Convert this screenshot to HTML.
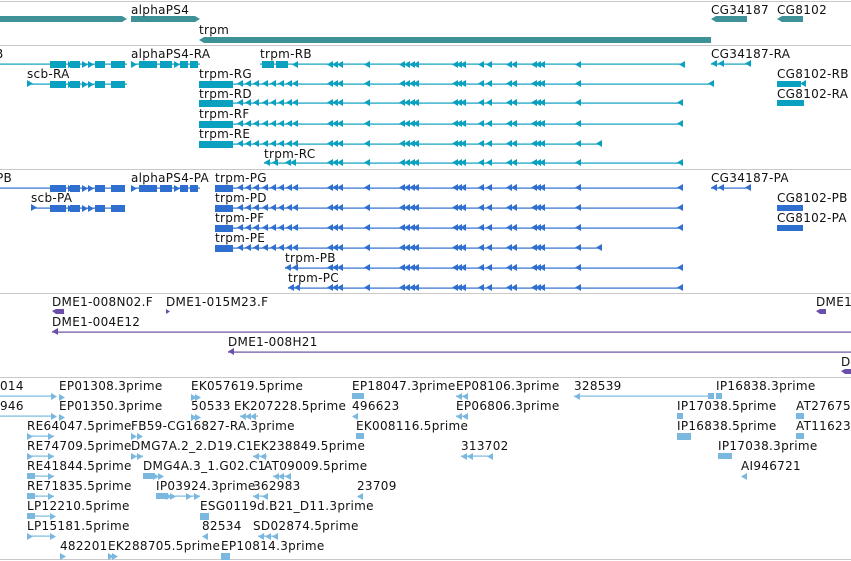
<!DOCTYPE html>
<html><head><meta charset="utf-8"><style>
body{margin:0;width:851px;height:561px;overflow:hidden;background:#fff;position:relative;font-family:"DejaVu Sans","Liberation Sans",sans-serif;font-size:12px;color:#111;letter-spacing:0.3px}
.t{position:absolute;white-space:nowrap;line-height:14px}
svg{position:absolute;left:0;top:0}
</style></head><body>
<svg width="851" height="561">
<defs>
<polygon id="l" points="0,3.5 6,0 6,7"/>
<polygon id="r" points="6,3.5 0,0 0,7"/>
<g id="arrA">
<use href="#l" x="237"/><use href="#l" x="245"/><use href="#l" x="253"/><use href="#l" x="262"/><use href="#l" x="270"/><use href="#l" x="278"/><use href="#l" x="286"/><use href="#l" x="292"/>
</g>
<g id="arrB">
<use href="#l" x="327"/><use href="#l" x="332"/><use href="#l" x="337"/><use href="#l" x="364"/>
<use href="#l" x="399"/><use href="#l" x="404"/><use href="#l" x="409"/><use href="#l" x="413"/>
<use href="#l" x="452"/><use href="#l" x="456"/><use href="#l" x="460"/><use href="#l" x="478"/><use href="#l" x="486"/>
<use href="#l" x="506"/><use href="#l" x="511"/><use href="#l" x="531"/><use href="#l" x="535"/><use href="#l" x="539"/><use href="#l" x="575"/>
</g>
<g id="arr"><use href="#arrA"/><use href="#arrB"/></g>
<g id="scb"><rect x="50" y="-3" width="16" height="7"/><use href="#r" x="68" y="-3"/><rect x="70" y="-3" width="10" height="7"/><use href="#r" x="82" y="-3"/><use href="#r" x="88" y="-3"/><rect x="95" y="-3" width="10" height="7"/><rect x="111" y="-3" width="14" height="7"/></g>
<g id="aps"><use href="#r" x="131" y="-3"/><rect x="139" y="-3" width="18" height="7"/><rect x="160" y="-3" width="12" height="7"/><use href="#r" x="174" y="-3"/><rect x="180" y="-3" width="8" height="7"/><rect x="190" y="-3" width="8" height="7"/></g>
</defs>
<g fill="none" stroke="#c8c8c8"><line x1="0" y1="1.5" x2="851" y2="1.5"/><line x1="0" y1="45.5" x2="851" y2="45.5"/><line x1="0" y1="169.5" x2="851" y2="169.5"/><line x1="0" y1="293.5" x2="851" y2="293.5"/><line x1="0" y1="377.5" x2="851" y2="377.5"/><line x1="0" y1="559.5" x2="851" y2="559.5"/></g>
<g fill="#3f9198"><rect x="0" y="16" width="122" height="6"/><polygon points="122,16 127,19 122,22"/><rect x="131" y="16" width="64" height="6"/><polygon points="195,16 200,19 195,22"/><polygon points="199,40 204,37 204,43"/><rect x="204" y="37" width="507" height="6"/><polygon points="711,19 716,16 716,22"/><rect x="716" y="16" width="31" height="6"/><polygon points="777,19 782,16 782,22"/><rect x="782" y="16" width="21" height="6"/></g>
<g fill="#0aa0c0" stroke="none">
<rect x="0" y="63.5" width="127" height="1.2"/><use href="#scb" y="64"/>
<rect x="131" y="63.5" width="69" height="1.2"/><use href="#aps" y="64"/>
<rect x="260" y="63.5" width="425" height="1.2"/><rect x="262" y="61" width="12" height="7"/><rect x="276" y="61" width="12" height="7"/><g transform="translate(0,61)"><use href="#arrB"/><use href="#l" x="292"/><use href="#l" x="679"/></g>
<rect x="711" y="63.5" width="40" height="1.2"/><use href="#l" x="711" y="60"/><use href="#l" x="718" y="60"/><use href="#l" x="745" y="60"/>
<rect x="27" y="83.5" width="100" height="1.2"/><use href="#r" x="27" y="80"/><use href="#scb" y="84"/>
<rect x="199" y="83.5" width="512" height="1.2"/><rect x="199" y="81" width="34" height="7"/><g transform="translate(0,80)"><use href="#arr"/><use href="#l" x="708"/></g>
<rect x="777" y="81" width="24" height="6"/><use href="#l" x="800" y="80"/>
<rect x="199" y="102.5" width="484" height="1.2"/><rect x="199" y="100" width="34" height="7"/><g transform="translate(0,99)"><use href="#arr"/><use href="#l" x="677"/></g>
<rect x="777" y="100" width="27" height="6"/>
<rect x="199" y="123.5" width="484" height="1.2"/><rect x="199" y="121" width="34" height="7"/><g transform="translate(0,120)"><use href="#arr"/><use href="#l" x="677"/></g>
<rect x="199" y="143.5" width="401" height="1.2"/><rect x="199" y="141" width="34" height="7"/><g transform="translate(0,140)"><use href="#arr"/><use href="#l" x="596"/></g>
<rect x="264" y="162.5" width="419" height="1.2"/><g transform="translate(0,159)"><use href="#l" x="264"/><use href="#l" x="272"/><use href="#l" x="285"/><use href="#l" x="290"/><use href="#arrB"/><use href="#l" x="677"/></g>
</g>
<g fill="#2e6fd0">
<rect x="0" y="187.5" width="115" height="1.2"/><use href="#scb" y="188"/>
<rect x="131" y="187.5" width="69" height="1.2"/><use href="#aps" y="188"/>
<rect x="215" y="187.5" width="468" height="1.2"/><rect x="215" y="185" width="18" height="7"/><g transform="translate(0,184)"><use href="#arr"/><use href="#l" x="677"/></g>
<rect x="711" y="187.5" width="40" height="1.2"/><use href="#l" x="711" y="184"/><use href="#l" x="718" y="184"/><use href="#l" x="745" y="184"/>
<rect x="31" y="207.5" width="84" height="1.2"/><use href="#r" x="31" y="204"/><use href="#scb" y="208"/>
<rect x="215" y="207.5" width="468" height="1.2"/><rect x="215" y="205" width="18" height="7"/><g transform="translate(0,204)"><use href="#arr"/><use href="#l" x="677"/></g>
<rect x="777" y="205" width="26" height="6"/>
<rect x="215" y="227.5" width="468" height="1.2"/><rect x="215" y="225" width="18" height="7"/><g transform="translate(0,224)"><use href="#arr"/><use href="#l" x="677"/></g>
<rect x="777" y="225" width="26" height="6"/>
<rect x="215" y="247.5" width="385" height="1.2"/><rect x="215" y="245" width="18" height="7"/><g transform="translate(0,244)"><use href="#arr"/><use href="#l" x="596"/></g>
<rect x="285" y="267.5" width="398" height="1.2"/><g transform="translate(0,264)"><use href="#l" x="285"/><use href="#l" x="292"/><use href="#arrB"/><use href="#l" x="677"/></g>
<rect x="288" y="287.5" width="395" height="1.2"/><g transform="translate(0,284)"><use href="#l" x="288"/><use href="#l" x="294"/><use href="#arrB"/><use href="#l" x="677"/></g>
</g>
<g fill="#6a4fa8">
<polygon points="52,311 56,309 64,309 64,314 56,314"/><polygon points="166,309 170,311.5 166,314"/><polygon points="816,311 820,309 826,309 826,314 820,314"/>
<rect x="52" y="331.5" width="799" height="1.2"/><use href="#l" x="52" y="328"/>
<rect x="228" y="351.5" width="623" height="1.2"/><use href="#l" x="228" y="348"/>
<polygon points="841,371 845,369 851,369 851,374 845,374"/>
</g>
<g fill="#7ab8e0">
<rect x="0" y="395.5" width="54" height="1.2"/><use href="#r" x="51" y="393"/><use href="#r" x="59" y="394"/>
<rect x="0" y="415.5" width="54" height="1.2"/><use href="#r" x="51" y="413"/><use href="#r" x="59" y="414"/>
<use href="#r" x="191" y="394"/><use href="#r" x="195" y="394"/><use href="#r" x="191" y="414"/><use href="#r" x="195" y="414"/>
<use href="#l" x="240" y="413"/><use href="#l" x="245" y="413"/><use href="#l" x="250" y="413"/><rect x="240" y="415.5" width="18" height="1.2"/>
<rect x="352" y="393" width="12" height="6"/><use href="#l" x="352" y="413"/><rect x="356" y="433" width="8" height="6"/>
<use href="#l" x="456" y="393"/><use href="#l" x="462" y="393"/><rect x="456" y="395.5" width="12" height="1.2"/>
<use href="#l" x="456" y="413"/><use href="#l" x="462" y="413"/><rect x="456" y="415.5" width="12" height="1.2"/>
<rect x="574" y="395.5" width="140" height="1.2"/><use href="#l" x="574" y="393"/><rect x="708" y="393" width="6" height="6"/>
<rect x="716" y="393" width="6" height="6"/><rect x="677" y="413" width="6" height="6"/><rect x="677" y="433" width="14" height="7"/>
<rect x="718" y="453" width="14" height="6"/><use href="#l" x="741" y="473"/><rect x="796" y="433" width="8" height="6"/><rect x="796" y="413" width="8" height="6"/>
<g transform="translate(0,433)"><rect x="27" y="2.5" width="27" height="1.2"/><use href="#r" x="27"/><use href="#r" x="48"/></g>
<g transform="translate(0,453)"><rect x="27" y="2.5" width="27" height="1.2"/><use href="#r" x="27"/><use href="#r" x="48"/></g>
<g transform="translate(0,473)"><rect x="27" y="2.5" width="27" height="1.2"/><rect x="27" y="0" width="8" height="6"/><use href="#r" x="48"/></g>
<g transform="translate(0,493)"><rect x="27" y="2.5" width="27" height="1.2"/><rect x="27" y="0" width="8" height="6"/><use href="#r" x="48"/></g>
<g transform="translate(0,513)"><rect x="27" y="2.5" width="27" height="1.2"/><rect x="27" y="0" width="8" height="6"/><use href="#r" x="50"/></g>
<g transform="translate(0,533)"><rect x="27" y="2.5" width="27" height="1.2"/><use href="#r" x="27"/><use href="#r" x="50"/></g>
<use href="#r" x="131" y="433"/><use href="#r" x="137" y="433"/><use href="#r" x="131" y="453"/><use href="#r" x="137" y="453"/><rect x="131" y="455.5" width="12" height="1.2"/>
<rect x="143" y="473" width="12" height="6"/><use href="#r" x="153" y="473"/><use href="#r" x="158" y="473"/>
<rect x="156" y="493" width="12" height="6"/><use href="#r" x="166" y="493"/><use href="#r" x="170" y="493"/><rect x="156" y="495.5" width="44" height="1.2"/><use href="#r" x="186" y="493"/><use href="#r" x="194" y="493"/>
<use href="#l" x="253" y="453"/><use href="#l" x="260" y="453"/><rect x="253" y="455.5" width="14" height="1.2"/>
<use href="#l" x="273" y="473"/><use href="#l" x="278" y="473"/><use href="#l" x="285" y="473"/><rect x="273" y="475.5" width="18" height="1.2"/>
<use href="#l" x="253" y="493"/><use href="#l" x="262" y="493"/><rect x="253" y="495.5" width="14" height="1.2"/>
<rect x="200" y="513" width="9" height="7"/><use href="#l" x="202" y="533"/>
<use href="#l" x="258" y="533"/><use href="#l" x="265" y="533"/><use href="#l" x="272" y="533"/><rect x="258" y="535.5" width="20" height="1.2"/>
<use href="#l" x="461" y="453"/><use href="#l" x="467" y="453"/><use href="#l" x="487" y="453"/><rect x="461" y="455.5" width="32" height="1.2"/>
<use href="#l" x="357" y="493"/>
<use href="#r" x="60" y="553"/><use href="#r" x="108" y="553"/><use href="#r" x="112" y="553"/><rect x="221" y="553" width="9" height="7"/>
</g>
</svg>
<div class="t" style="left:131px;top:3px">alphaPS4</div>
<div class="t" style="left:199px;top:23px">trpm</div>
<div class="t" style="left:711px;top:3px">CG34187</div>
<div class="t" style="left:777px;top:3px">CG8102</div>

<div class="t" style="left:-5px;top:47px">B</div>
<div class="t" style="left:131px;top:47px">alphaPS4-RA</div>
<div class="t" style="left:260px;top:47px">trpm-RB</div>
<div class="t" style="left:711px;top:47px">CG34187-RA</div>
<div class="t" style="left:27px;top:67px">scb-RA</div>
<div class="t" style="left:199px;top:67px">trpm-RG</div>
<div class="t" style="left:777px;top:67px">CG8102-RB</div>
<div class="t" style="left:199px;top:87px">trpm-RD</div>
<div class="t" style="left:777px;top:87px">CG8102-RA</div>
<div class="t" style="left:199px;top:107px">trpm-RF</div>
<div class="t" style="left:199px;top:127px">trpm-RE</div>
<div class="t" style="left:264px;top:147px">trpm-RC</div>

<div class="t" style="left:-4px;top:171px">PB</div>
<div class="t" style="left:131px;top:171px">alphaPS4-PA</div>
<div class="t" style="left:215px;top:171px">trpm-PG</div>
<div class="t" style="left:711px;top:171px">CG34187-PA</div>
<div class="t" style="left:31px;top:191px">scb-PA</div>
<div class="t" style="left:215px;top:191px">trpm-PD</div>
<div class="t" style="left:777px;top:191px">CG8102-PB</div>
<div class="t" style="left:215px;top:211px">trpm-PF</div>
<div class="t" style="left:777px;top:211px">CG8102-PA</div>
<div class="t" style="left:215px;top:231px">trpm-PE</div>
<div class="t" style="left:285px;top:251px">trpm-PB</div>
<div class="t" style="left:288px;top:271px">trpm-PC</div>

<div class="t" style="left:52px;top:295px">DME1-008N02.F</div>
<div class="t" style="left:166px;top:295px">DME1-015M23.F</div>
<div class="t" style="left:816px;top:295px">DME1</div>
<div class="t" style="left:52px;top:315px">DME1-004E12</div>
<div class="t" style="left:228px;top:335px">DME1-008H21</div>
<div class="t" style="left:841px;top:355px">D</div>

<div class="t" style="left:0px;top:379px">014</div>
<div class="t" style="left:59px;top:379px">EP01308.3prime</div>
<div class="t" style="left:191px;top:379px">EK057619.5prime</div>
<div class="t" style="left:352px;top:379px">EP18047.3prime</div>
<div class="t" style="left:456px;top:379px">EP08106.3prime</div>
<div class="t" style="left:574px;top:379px">328539</div>
<div class="t" style="left:716px;top:379px">IP16838.3prime</div>
<div class="t" style="left:0px;top:399px">946</div>
<div class="t" style="left:59px;top:399px">EP01350.3prime</div>
<div class="t" style="left:191px;top:399px">50533</div>
<div class="t" style="left:234px;top:399px">EK207228.5prime</div>
<div class="t" style="left:352px;top:399px">496623</div>
<div class="t" style="left:456px;top:399px">EP06806.3prime</div>
<div class="t" style="left:677px;top:399px">IP17038.5prime</div>
<div class="t" style="left:796px;top:399px">AT27675</div>
<div class="t" style="left:27px;top:419px">RE64047.5prime</div>
<div class="t" style="left:131px;top:419px">FB59-CG16827-RA.3prime</div>
<div class="t" style="left:356px;top:419px">EK008116.5prime</div>
<div class="t" style="left:677px;top:419px">IP16838.5prime</div>
<div class="t" style="left:796px;top:419px">AT11623</div>
<div class="t" style="left:27px;top:439px">RE74709.5prime</div>
<div class="t" style="left:131px;top:439px">DMG7A.2_2.D19.C1</div>
<div class="t" style="left:253px;top:439px">EK238849.5prime</div>
<div class="t" style="left:461px;top:439px">313702</div>
<div class="t" style="left:718px;top:439px">IP17038.3prime</div>
<div class="t" style="left:27px;top:459px">RE41844.5prime</div>
<div class="t" style="left:143px;top:459px">DMG4A.3_1.G02.C1</div>
<div class="t" style="left:264px;top:459px">AT09009.5prime</div>
<div class="t" style="left:357px;top:479px">23709</div>
<div class="t" style="left:741px;top:459px">AI946721</div>
<div class="t" style="left:27px;top:479px">RE71835.5prime</div>
<div class="t" style="left:156px;top:479px">IP03924.3prime</div>
<div class="t" style="left:253px;top:479px">362983</div>
<div class="t" style="left:27px;top:499px">LP12210.5prime</div>
<div class="t" style="left:200px;top:499px">ESG0119d.B21_D11.3prime</div>
<div class="t" style="left:27px;top:519px">LP15181.5prime</div>
<div class="t" style="left:202px;top:519px">82534</div>
<div class="t" style="left:253px;top:519px">SD02874.5prime</div>
<div class="t" style="left:60px;top:539px">482201</div>
<div class="t" style="left:108px;top:539px">EK288705.5prime</div>
<div class="t" style="left:221px;top:539px">EP10814.3prime</div>
</body></html>
